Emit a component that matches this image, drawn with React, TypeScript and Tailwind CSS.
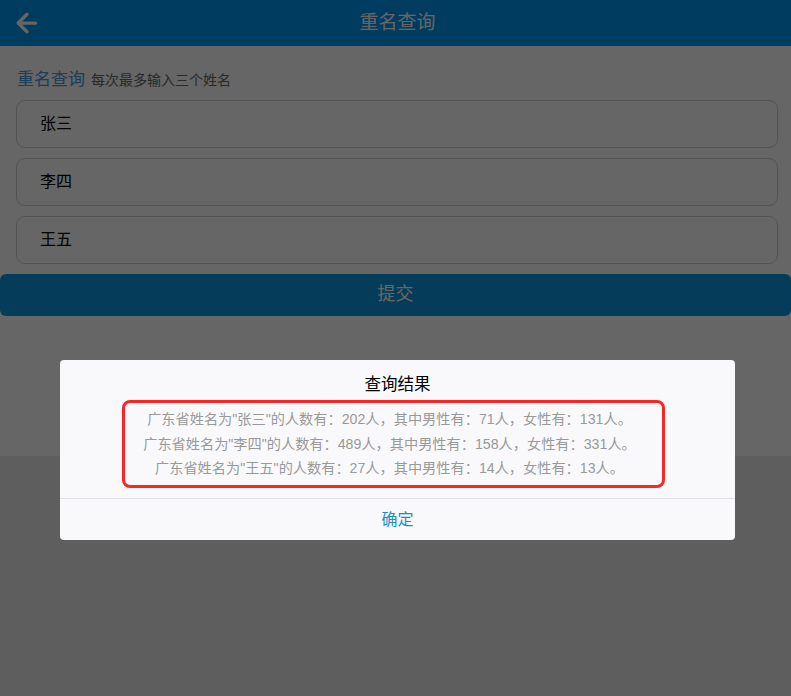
import { ArrowLeft } from "lucide-react";

const names = ["张三", "李四", "王五"];

const results = [
  { name: "张三", total: 202, male: 71, female: 131 },
  { name: "李四", total: 489, male: 158, female: 331 },
  { name: "王五", total: 27, male: 14, female: 13 },
];

const font = { fontFamily: '"Liberation Sans", "Noto Sans CJK SC", sans-serif' };

const App = () => {
  return (
    <div className="min-h-[696px] bg-[#ebebeb]" style={font}>
      <div className="bg-white pb-[140px]">
        <header className="h-[46px] bg-[#0093ef] flex items-center relative">
          <button className="absolute left-[12px] top-[8px] text-white">
            <ArrowLeft className="w-[30px] h-[30px]" strokeWidth={2.6} />
          </button>
          <h1 className="w-full pl-[4px] text-center text-white text-[19px]">重名查询</h1>
        </header>

        <div className="pl-[16px] pr-[13px] pt-[21px]">
          <div className="flex items-baseline gap-[6px] ml-[1px]">
            <span className="text-[17px] text-[#4a96dc]">重名查询</span>
            <span className="text-[14px] text-[#666]">每次最多输入三个姓名</span>
          </div>
          <div className="mt-[7px] flex flex-col gap-[10px]">
            {names.map((n) => (
              <input
                key={n}
                defaultValue={n}
                className="h-[48px] w-full rounded-[9px] border border-[#d0d0d0] px-[23px] pb-[3px] text-[16px] text-black outline-none"
              />
            ))}
          </div>
        </div>

        <button className="mt-[10px] h-[42px] w-full rounded-[6px] bg-[#0a97de] text-[18px] text-white">
          提交
        </button>
      </div>

      <div className="fixed inset-0 bg-black/60">
        <div className="mt-[360px] ml-[60px] w-[675px] h-[180px] bg-[#f9f9fb] rounded-[4px] flex flex-col">
          <h2 className="pt-[11px] text-center text-[16.5px] text-black leading-[26px]">查询结果</h2>
          <div className="mt-[3px] ml-[62px] w-[543px] rounded-[8px] border-[3px] border-[#ff2424] py-[4px] pr-[8px] text-center text-[14.2px] leading-[24.5px] text-[#999]">
            {results.map((r) => (
              <p key={r.name}>
                广东省姓名为"{r.name}"的人数有：{r.total}人，其中男性有：{r.male}人，女性有：{r.female}人。
              </p>
            ))}
          </div>
          <div className="mt-auto h-[42px] border-t border-[#e2e2e6] flex items-center justify-center">
            <span className="text-[16px] text-[#1a8fc2]">确定</span>
          </div>
        </div>
      </div>
    </div>
  );
};

export default App;
